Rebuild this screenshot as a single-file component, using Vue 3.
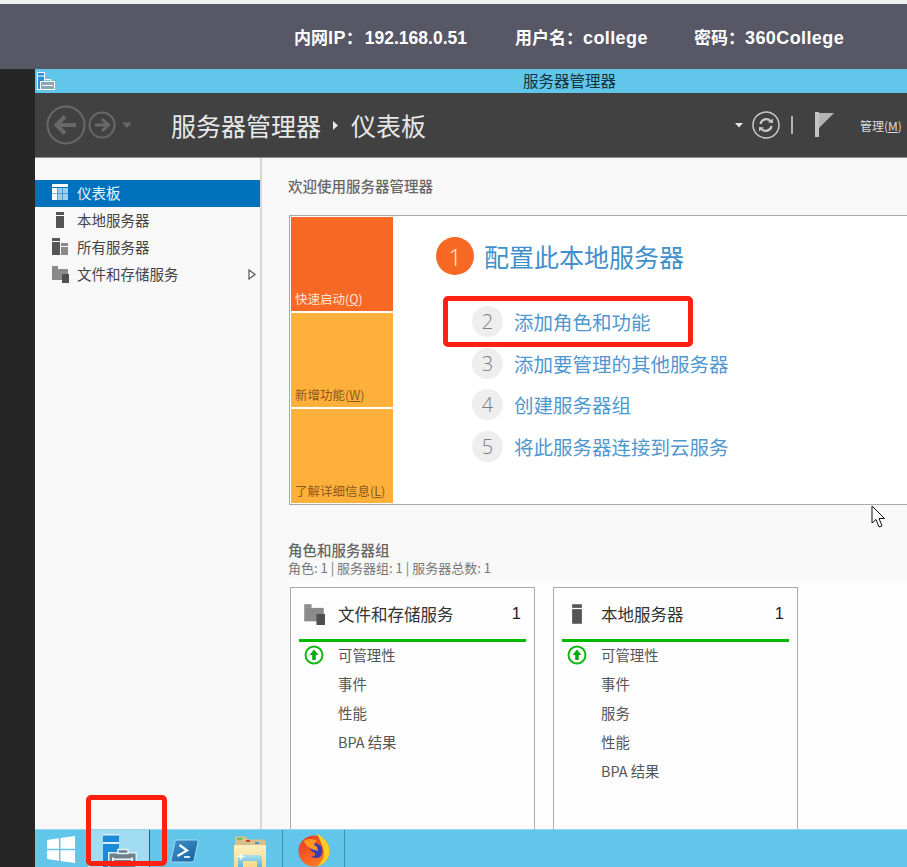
<template>
  <div class="page">
    <div class="topbar">
      <span class="cred cred-ip">内网<span class="ip-tag">IP</span>：<span class="ip-num">192.168.0.51</span></span>
      <span class="cred cred-user">用户名：<span class="lat">college</span></span>
      <span class="cred">密码：<span class="lat">360College</span></span>
    </div>

    <div class="desk">
      <div class="strip"></div>

      <div class="win">
        <div class="titlebar">
          <svg class="title-ico" width="18" height="18" viewBox="0 0 18 18">
            <rect x="0.5" y="0.5" width="7" height="17" fill="#2b8fd8" stroke="#fff" />
            <rect x="1" y="3.5" width="6" height="1" fill="#fff" />
            <rect x="3.5" y="9.5" width="14" height="8" fill="#8aa4b8" stroke="#fff" />
            <rect x="7.5" y="7.5" width="6" height="2" fill="none" stroke="#fff" />
            <rect x="5" y="13" width="11" height="1" fill="#fff" />
          </svg>
          <span class="title-text">服务器管理器</span>
        </div>

        <header class="head">
          <svg class="nav-ico" width="100" height="42" viewBox="0 0 100 42">
            <g fill="none" stroke="#686868">
              <circle cx="20" cy="21" r="18.5" stroke-width="2" />
              <circle cx="56" cy="21" r="12.5" stroke-width="2" />
              <path d="M30 21H11M19 12.5L10.500 21L19 29.500" stroke-width="4" />
              <path d="M49 21H62M56 15L62.500 21L56 27" stroke-width="3" />
            </g>
            <path d="M76 18.500H86L81 24Z" fill="#686868" />
          </svg>
          <div class="crumb">
            <span>服务器管理器</span>
            <svg class="crumb-arrow" width="6" height="9" viewBox="0 0 6 9"><path d="M0 0L5 4.500L0 9Z" fill="#e8e8e8" /></svg>
            <span>仪表板</span>
          </div>
          <div class="tools">
            <svg width="8" height="5" viewBox="0 0 8 5"><path d="M0 0H8L4 4.500Z" fill="#e4e4e4" /></svg>
            <svg class="refresh" width="28" height="28" viewBox="0 0 28 28">
              <circle cx="14" cy="14" r="13" fill="none" stroke="#c8c8c8" stroke-width="1.500" />
              <g fill="none" stroke="#c8c8c8" stroke-width="2.200">
                <path d="M8.500 13A5.800 5.800 0 0 1 18.500 10" />
                <path d="M19.500 15A5.800 5.800 0 0 1 9.500 18" />
              </g>
              <path d="M16 11.500L21 12V7.500ZM12 16.500L7 16V20.500Z" fill="#c8c8c8" />
            </svg>
            <span class="tool-sep"></span>
            <svg class="flag" width="19" height="26" viewBox="0 0 19 26">
              <rect x="0" y="0" width="4" height="25" fill="#c4c4c4" />
              <path d="M4 1H19L4 16Z" fill="#b4b4b4" />
            </svg>
            <span class="manage">管理(<u>M</u>)</span>
          </div>
        </header>

        <div class="content">
          <nav class="side">
            <div v-for="item in navItems" :key="item.label" class="nav-row" :class="{ active: item.active }">
              <svg class="nav-row-ico" width="18" height="18" viewBox="0 0 18 18">
                <rect v-for="(r, i) in icons[item.icon]" :key="i" :x="r[0]" :y="r[1]" :width="r[2]" :height="r[3]" :fill="r[4]" />
              </svg>
              <span class="nav-label">{{ item.label }}</span>
              <svg v-if="item.more" class="nav-more" width="8" height="11" viewBox="0 0 8 11">
                <path d="M1 1L7 5.500L1 10Z" fill="#fff" stroke="#555" stroke-width="1.200" />
              </svg>
            </div>
          </nav>

          <main class="main">
            <div class="welcome-h">欢迎使用服务器管理器</div>

            <section class="welcome">
              <div class="tiles">
                <div class="tile tile-on">快速启动(<u>Q</u>)</div>
                <div class="tile">新增功能(<u>W</u>)</div>
                <div class="tile">了解详细信息(<u>L</u>)</div>
              </div>
              <div class="steps">
                <div class="step-main">
                  <span class="step-badge">1</span>
                  <span>配置此本地服务器</span>
                </div>
                <div v-for="s in steps" :key="s.n" class="step">
                  <span class="step-num">{{ s.n }}</span>
                  <span>{{ s.text }}</span>
                </div>
              </div>
            </section>

            <div class="roles-h">角色和服务器组</div>
            <div class="roles-sub">角色: 1 | 服务器组: 1 | 服务器总数: 1</div>

            <section class="cards">
              <article v-for="card in cards" :key="card.title" class="card">
                <div class="card-head">
                  <svg class="card-ico" width="22" height="22" viewBox="0 0 18 18">
                    <rect v-for="(r, i) in icons[card.icon]" :key="i" :x="r[0]" :y="r[1]" :width="r[2]" :height="r[3]" :fill="r[4]" />
                  </svg>
                  <span class="card-title">{{ card.title }}</span>
                  <span class="card-count">1</span>
                </div>
                <div v-for="(row, i) in card.rows" :key="row" class="card-row">
                  <svg v-if="i === 0" class="ok" width="20" height="20" viewBox="0 0 20 20">
                    <circle cx="10" cy="10" r="8.500" fill="#fff" stroke="#10b810" stroke-width="2" />
                    <path d="M10 4.500L14.500 10H11.800V15H8.200V10H5.500Z" fill="#10a810" />
                  </svg>
                  {{ row }}
                </div>
              </article>
            </section>
          </main>
        </div>

        <footer class="taskbar">
          <div class="task task-start">
            <svg width="28" height="27" viewBox="0 0 28 27">
              <path d="M0 4L12 2.200V12.800H0ZM13.500 2L28 0V12.800H13.500ZM0 14.200H12V24.800L0 23ZM13.500 14.200H28V27L13.500 25Z" fill="#fff" />
            </svg>
          </div>
          <div class="task task-active">
            <svg width="34" height="33" viewBox="0 0 34 33">
              <rect x="0" y="0" width="16" height="33" fill="#1b8ad8" />
              <rect x="0" y="0" width="16" height="1.500" fill="#d8f0fb" />
              <rect x="0" y="8" width="16" height="2" fill="#d8f0fb" />
              <rect x="5" y="18" width="29" height="15" fill="#d8eef8" />
              <rect x="6.500" y="19.500" width="26" height="14" fill="#6f7f8c" />
              <rect x="15" y="15.500" width="10" height="4" fill="#6f7f8c" stroke="#e4f2f8" stroke-width="1.500" />
              <rect x="9" y="24.500" width="21" height="1.500" fill="#e8f4fa" />
              <rect x="9" y="23.500" width="2" height="3.500" fill="#e8f4fa" />
              <rect x="28" y="23.500" width="2" height="3.500" fill="#e8f4fa" />
            </svg>
          </div>
          <div class="task task-ps">
            <svg width="29" height="24" viewBox="0 0 29 24">
              <defs>
                <linearGradient id="psFill" x1="0" y1="0" x2="1" y2="1">
                  <stop offset="0" stop-color="#3f93cf" />
                  <stop offset="1" stop-color="#17609f" />
                </linearGradient>
              </defs>
              <path d="M7 1H27Q28.500 1 28 3L24 21.500Q23.500 23 22 23H2Q0.500 23 1 21L5 2.500Q5.500 1 7 1Z" fill="url(#psFill)" stroke="#a8d8ee" />
              <path d="M9.500 6L17 11.500L7.500 17" fill="none" stroke="#fff" stroke-width="2.200" />
              <path d="M14 18H20" stroke="#eaf5fb" stroke-width="1.800" />
            </svg>
          </div>
          <div class="task task-folder">
            <svg width="34" height="31" viewBox="0 0 34 31">
              <defs>
                <linearGradient id="folderFill" x1="0" y1="0" x2="0" y2="1">
                  <stop offset="0" stop-color="#fdf0c0" />
                  <stop offset="1" stop-color="#f6d98a" />
                </linearGradient>
                <linearGradient id="baseFill" x1="0" y1="0" x2="0" y2="1">
                  <stop offset="0" stop-color="#a8e0f0" />
                  <stop offset="1" stop-color="#5fb4dc" />
                </linearGradient>
              </defs>
              <path d="M2 2Q2 0.500 4 0.500H13L15 3.500H31Q32.500 3.500 32.500 5V31H2Z" fill="#d8c08a" />
              <rect x="4" y="2" width="5" height="1.500" fill="#2fc04a" />
              <rect x="13" y="4" width="4" height="2" fill="#d8402a" />
              <rect x="22" y="6" width="4" height="2" fill="#3a9ae0" />
              <path d="M1 9H33V31H1Z" fill="url(#folderFill)" />
              <path d="M5 31V22Q5 19 8 19H26Q29 19 29 22V31H24V25H10V31Z" fill="url(#baseFill)" />
              <path d="M8 16L9 19.500L12.500 20.500L9 21.500L8 25L7 21.500L3.500 20.500L7 19.500Z" fill="#fff" />
            </svg>
          </div>
          <div class="task task-fox">
            <svg width="34" height="34" viewBox="0 0 34 34">
              <defs>
                <linearGradient id="foxFill" x1="0" y1="0" x2="0.600" y2="1">
                  <stop offset="0" stop-color="#e8342c" />
                  <stop offset="1" stop-color="#ff7a1e" />
                </linearGradient>
              </defs>
              <circle cx="17" cy="18" r="15.500" fill="url(#foxFill)" />
              <path d="M20 0.500C27 5 33.500 11 32.500 20C31.500 27 26 32 20 33C27 28 28 21 26 15C25 10 22 6 20 0.500Z" fill="#ffcf24" />
              <path d="M11 11C15 9 21 10 24 13C26 16 26 21 23 24C20 26 16 25 14 23C17 24 19 22 18 20C15 19 12 16 11 11Z" fill="#3c3cae" />
              <path d="M7 8C11 5 17 6 20 8C18 9 17 10.500 17 12C20 13 21.500 15.500 20.500 18C18.500 16.500 15 17 13 15C10.500 13.500 8 11.500 7 8Z" fill="#ff9a1f" />
            </svg>
          </div>
        </footer>
      </div>
    </div>

    <!-- red annotations and pointer sit on top of the screenshot -->
    <div class="mark mark-step"></div>
    <div class="mark mark-task"></div>
    <svg class="pointer" width="16" height="24" viewBox="0 0 16 24">
      <path d="M1 1V18L5 14.500L8 22L11 20.800L8 13.500H13.500Z" fill="#fff" stroke="#111" stroke-width="1" />
    </svg>
  </div>
</template>

<script setup>
const icons = {
  dash: [
    [1, 0, 16, 3, '#ffffff'],
    [1, 4, 5, 5.5, '#ffffff'], [6.500, 4, 5, 5.5, '#9fcdea'], [12, 4, 5, 5.5, '#9fcdea'],
    [1, 10, 5, 6, '#ffffff'], [6.500, 10, 5, 6, '#9fcdea'], [12, 10, 5, 6, '#9fcdea'],
  ],
  server: [
    [5, 1, 8, 3, '#555555'],
    [5, 5, 8, 12, '#555555'],
  ],
  all: [
    [1, 0, 8, 3, '#555555'], [1, 4, 8, 13, '#555555'],
    [10, 5, 7, 3, '#8a8a8a'], [10, 9, 7, 8, '#8a8a8a'],
  ],
  files: [
    [1, 1, 6, 3, '#8a8a8a'], [1, 4, 16, 11, '#8a8a8a'],
    [11, 9, 7, 9, '#4f4f4f'],
  ],
}

const navItems = [
  { label: '仪表板', icon: 'dash', active: true },
  { label: '本地服务器', icon: 'server' },
  { label: '所有服务器', icon: 'all' },
  { label: '文件和存储服务', icon: 'files', more: true },
]

const steps = [
  { n: 2, text: '添加角色和功能' },
  { n: 3, text: '添加要管理的其他服务器' },
  { n: 4, text: '创建服务器组' },
  { n: 5, text: '将此服务器连接到云服务' },
]

const cards = [
  { title: '文件和存储服务', icon: 'files', rows: ['可管理性', '事件', '性能', 'BPA 结果'] },
  { title: '本地服务器', icon: 'server', rows: ['可管理性', '事件', '服务', '性能', 'BPA 结果'] },
]
</script>

<style>
html, body { margin: 0; padding: 0; background: #f8f8f8; }
</style>

<style scoped>
.page {
  position: relative;
  width: 907px;
  height: 867px;
  overflow: hidden;
  display: flex;
  flex-direction: column;
  font-family: "Noto Sans CJK SC", "Liberation Sans", sans-serif;
}

.topbar {
  flex: none;
  height: 64px;
  border-top: 4px solid #f2f2f2;
  background: #575766;
  display: flex;
  align-items: center;
  padding-left: 294px;
  padding-bottom: 1px;
  color: #fff;
  font-family: "Liberation Sans", "Noto Sans CJK SC", sans-serif;
  font-size: 17px;
  font-weight: 700;
  white-space: nowrap;
}
.cred-ip { width: 221px; }
.cred-user { width: 179px; }
.ip-tag { font-size: 18px; letter-spacing: 0.4px; }
.ip-num { font-size: 17.500px; margin-left: 2px; }
.lat { font-size: 18px; letter-spacing: 0.400px; }

.desk { flex: 1; min-height: 0; display: flex; }
.strip { flex: none; width: 35px; background: #262626; }
.win { flex: 1; min-width: 0; display: flex; flex-direction: column; }

.titlebar {
  flex: none;
  height: 24px;
  background: #62c6ea;
  display: flex;
  align-items: center;
  padding-left: 2px;
  font-size: 15.500px;
  line-height: 22px;
  color: #12323f;
}
.title-ico { flex: none; }
.title-text { margin: -2px 0 0 468px; }

.head {
  flex: none;
  height: 64px;
  background: #414141;
  border-bottom: 1px solid #8f8f8f;
  display: flex;
  align-items: center;
  padding-left: 11px;
  color: #e8e8e8;
  white-space: nowrap;
}
.nav-ico { flex: none; }
.crumb {
  flex: none;
  margin-left: 25px;
  display: flex;
  align-items: center;
  font-size: 25px;
  width: 255px;
}
.crumb-arrow { margin: 0 12px 0 12px; }
.tools {
  flex: none;
  margin-left: 309px;
  display: flex;
  align-items: center;
}
.refresh { margin-left: 9px; }
.tool-sep { width: 2px; height: 18px; background: #b4b4b4; margin-left: 11px; }
.flag { margin-left: 22px; }
.manage { margin-left: 26px; font-size: 12px; color: #dcdcdc; }

.content { flex: 1; min-height: 0; display: flex; background: #f8f8f8; }

.side {
  flex: none;
  width: 225px;
  border-right: 2px solid #d8d8d8;
  padding-top: 22px;
  font-size: 14.500px;
  color: #444;
}
.nav-row {
  height: 27px;
  display: flex;
  align-items: center;
  padding-left: 16px;
}
.nav-row.active { background: #0072bd; color: #e8f4fb; }
.nav-row-ico { flex: none; margin-top: -2px; }
.nav-label { margin: -2px 0 0 8px; flex: 1; }
.nav-more { margin-right: 4px; }

.main { flex: 1; min-width: 0; padding-left: 26px; display: flex; flex-direction: column; overflow: hidden; }
.welcome-h { margin-top: 18px; margin-bottom: 1px; line-height: 20px; font-size: 14.500px; font-weight: 500; color: #666; white-space: nowrap; }

.welcome {
  flex: none;
  margin: 18px 0 0 1px;
  height: 286px;
  width: 700px;
  padding: 1px;
  border: 1px solid #aaa;
  background: #fff;
  display: flex;
}
.tiles { flex: none; width: 102px; display: flex; flex-direction: column; gap: 2px; }
.tile {
  flex: 1;
  background: #ffb03b;
  color: #8a5a1e;
  font-size: 12.500px;
  display: flex;
  align-items: flex-end;
  white-space: pre;
  padding: 0 0 3px 4px;
}
.tile-on { background: #f66824; color: #ffe6d8; }

.steps { flex: 1; padding: 20px 0 0 43px; color: #3f8fcb; white-space: nowrap; }
.step-main { display: flex; align-items: center; gap: 10px; font-size: 25px; height: 38px; margin-bottom: 31px; }
.step-badge {
  flex: none;
  width: 38px;
  height: 38px;
  border-radius: 50%;
  background: #f66824;
  color: #ffe8dc;
  display: flex;
  align-items: center;
  justify-content: center;
  font: 300 24px "Open Sans", sans-serif;
}
.step {
  display: flex;
  align-items: center;
  gap: 11px;
  height: 31px;
  margin: 0 0 10.700px 36px;
  font-size: 19.500px;
  color: #4f97cf;
}
.step-num {
  flex: none;
  width: 31px;
  height: 31px;
  border-radius: 50%;
  background: #eeeeee;
  color: #7d7d7d;
  display: flex;
  align-items: center;
  justify-content: center;
  font: 300 20px "Open Sans", sans-serif;
}

.roles-h { margin-top: 35px; line-height: 20px; font-size: 14.500px; font-weight: 500; color: #666; white-space: nowrap; }
.roles-sub { line-height: 16px; font-size: 13px; color: #777; white-space: nowrap; }

.cards {
  flex: 1;
  min-height: 0;
  overflow: hidden;
  margin: 3px 0 0 1px;
  padding: 8px 0 0 1px;
  background: #fdfdfd;
  display: flex;
  gap: 18px;
}
.card {
  flex: none;
  box-sizing: border-box;
  width: 245px;
  height: 280px;
  border: 1px solid #aaa;
  padding: 0 8px;
  color: #555;
}
.card-head {
  height: 51px;
  border-bottom: 3px solid #00b900;
  display: flex;
  align-items: center;
}
.card-ico { flex: none; margin-left: 4px; }
.card-title { margin-left: 13px; flex: 1; font-size: 16.500px; color: #333; }
.card-count { font: 16.500px "Liberation Sans", sans-serif; color: #222; margin-right: 5px; }
.card-row {
  position: relative;
  height: 29px;
  line-height: 25px;
  padding-left: 39px;
  font-size: 14.400px;
}
.ok { position: absolute; left: 5px; top: 3px; }

.taskbar {
  flex: none;
  height: 38px;
  background: #62c6ea;
  display: flex;
  overflow: hidden;
  align-items: flex-start;
  border-top: 1px solid #8fd6ee;
  box-sizing: border-box;
}
.task { flex: none; height: 38px; display: flex; justify-content: center; box-sizing: border-box; }
.task-start { width: 53px; padding: 6px 2px 0 0; }
.task-active {
  width: 62px;
  background: #a2dcf2;
  border-right: 1px solid #2f5f78;
  padding: 4px 0 0 3px;
}
.task-ps { width: 71px; padding: 9px 2px 0 0; }
.task-folder { width: 62px; padding: 6px 4px 0 0; border-right: 1px solid #3f8faf; }
.task-fox { width: 62px; padding-top: 3px; border-right: 1px solid #3f8faf; }

.mark { position: absolute; box-sizing: border-box; border: 5px solid #ff2012; border-radius: 5px; }
.mark-step { left: 443px; top: 296px; width: 250px; height: 51px; }
.mark-task { left: 86px; top: 795px; width: 81px; height: 71px; }
.pointer { position: absolute; left: 871px; top: 505px; }
</style>
